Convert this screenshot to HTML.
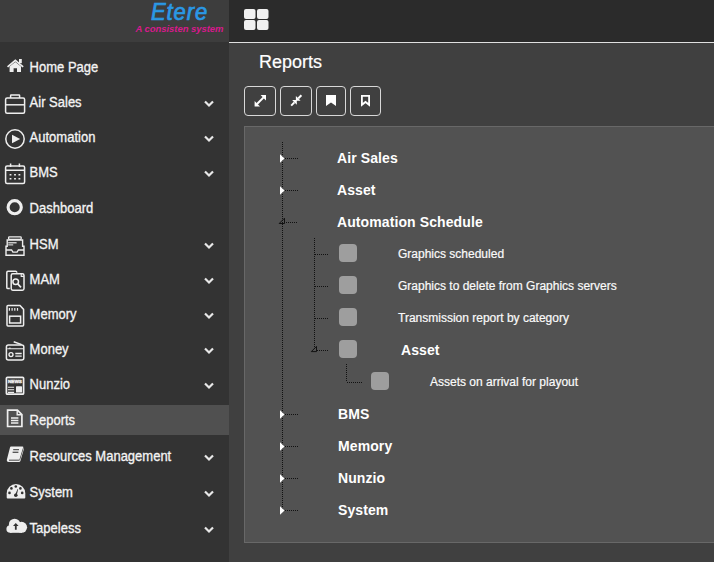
<!DOCTYPE html>
<html><head><meta charset="utf-8">
<style>
html,body{margin:0;padding:0;width:714px;height:562px;overflow:hidden;background:#404040;font-family:"Liberation Sans",sans-serif;position:relative}
.a{position:absolute}
#sb{left:0;top:0;width:229px;height:562px;background:#333}
#logo{left:0;top:0;width:229px;height:42px;background:#3d3d3d}
#act{left:0;top:405px;width:229px;height:30px;background:#505050}
.it{position:absolute;left:29.6px;font-size:13px;line-height:13px;color:#f4f4f4;white-space:nowrap;-webkit-text-stroke:0.3px #f4f4f4;transform:scaleY(1.08);transform-origin:0 11px}
#top{left:229px;top:0;width:485px;height:42px;background:#2b2b2b;border-bottom:1px solid #e0e0e0}
#title{left:259px;top:53px;font-size:18px;line-height:18px;color:#fff;-webkit-text-stroke:0.2px #fff}
.btn{position:absolute;top:86px;height:28px;border:1px solid #d8d8d8;border-radius:4px;box-sizing:border-box;height:30px}
#panel{left:244px;top:126px;width:480px;height:417px;background:#525252;border:1px solid #686868;box-sizing:border-box}
.tl{position:absolute;font-size:14px;line-height:14px;font-weight:bold;color:#fff;white-space:nowrap;letter-spacing:0.1px}
.lf{position:absolute;font-size:12px;line-height:12px;color:#fafafa;white-space:nowrap;-webkit-text-stroke:0.2px #fafafa}
.cb{position:absolute;width:18px;height:18px;border-radius:4px;background:#9e9e9e}
#etere{left:151px;top:1.5px;font-size:22px;line-height:22px;font-style:italic;font-weight:normal;color:#2a98e6;letter-spacing:0.9px;transform:scaleY(1.05);transform-origin:0 19px;-webkit-text-stroke:0.7px #2a98e6}
#tag{left:135.5px;top:23.5px;font-size:9.5px;line-height:9.5px;font-style:italic;font-weight:bold;color:#d8198c;letter-spacing:-0.05px}
</style></head><body>
<div id="sb" class="a"></div>
<div id="logo" class="a"></div>
<div id="etere" class="a">Etere</div>
<div id="tag" class="a">A consisten system</div>
<div id="act" class="a"></div>
<div class="it" style="top:61px">Home Page</div>
<div class="it" style="top:96px">Air Sales</div>
<div class="it" style="top:131px">Automation</div>
<div class="it" style="top:166px">BMS</div>
<div class="it" style="top:202px">Dashboard</div>
<div class="it" style="top:238px">HSM</div>
<div class="it" style="top:273px">MAM</div>
<div class="it" style="top:308px">Memory</div>
<div class="it" style="top:343px">Money</div>
<div class="it" style="top:378px">Nunzio</div>
<div class="it" style="top:414px">Reports</div>
<div class="it" style="top:450px">Resources Management</div>
<div class="it" style="top:486px">System</div>
<div class="it" style="top:522px">Tapeless</div>

<svg class="a" style="left:0;top:0" width="229" height="562" viewBox="0 0 229 562">
<g fill="none" stroke="#e8e8e8" stroke-width="2.2" stroke-linecap="butt" stroke-linejoin="miter">
<path d="M205,101.5 L209,105.5 L213,101.5"/>
<path d="M205,136.5 L209,140.5 L213,136.5"/>
<path d="M205,171.5 L209,175.5 L213,171.5"/>
<path d="M205,243.5 L209,247.5 L213,243.5"/>
<path d="M205,278.5 L209,282.5 L213,278.5"/>
<path d="M205,313.5 L209,317.5 L213,313.5"/>
<path d="M205,348.5 L209,352.5 L213,348.5"/>
<path d="M205,383.5 L209,387.5 L213,383.5"/>
<path d="M205,455.5 L209,459.5 L213,455.5"/>
<path d="M205,491.5 L209,495.5 L213,491.5"/>
<path d="M205,527.5 L209,531.5 L213,527.5"/>
</g>
<!-- home -->
<g fill="#eee">
<path d="M7,66.3 L15.3,59.3 L23.7,66.3 L22.6,67.5 L15.3,61.4 L8.1,67.5 Z"/>
<rect x="19" y="59" width="2.8" height="4.2"/>
<path d="M9.6,66.6 L15.3,62 L21,66.6 V72 H17 V68.2 H13.6 V72 H9.6 Z"/>
</g>
<g fill="none" stroke="#eee" stroke-width="1.5">
<!-- briefcase -->
<rect x="5.6" y="98" width="19" height="15.2" rx="1.5"/>
<path d="M10.6,98 V95.6 Q10.6,95 11.2,95 H19 Q19.6,95 19.6,95.6 V98"/>
<path d="M5.6,104.8 H24.6"/>
<!-- play -->
<circle cx="15" cy="139" r="9.2"/>
<!-- calendar -->
<rect x="5.6" y="166" width="19" height="17.4" rx="1.5"/>
<path d="M5.6,170.3 H24.6 M10.6,163.5 V167 M19.4,163.5 V167"/>
<!-- dashboard ring -->
<circle cx="14.7" cy="207.2" r="6.6" stroke-width="3.1"/>
<!-- HSM tray -->
<rect x="8.6" y="236.8" width="12.6" height="2.6" rx="0.8" stroke-width="1.3"/>
<path d="M7.2,240 H22.6 V246.2 H24 V255.2 H6 V246.2 H7.2 Z" stroke-width="1.4"/>
<path d="M6,250 H11.6 L12.9,252.2 H17.1 L18.4,250 H24" stroke-width="1.3"/>
<!-- MAM -->
<path d="M9.8,288.6 H8 Q6.8,288.6 6.8,287.4 V272.4 Q6.8,271.2 8,271.2 H15.6 Q16.6,271.2 17,272.6"/>
<rect x="11.2" y="273.8" width="12.8" height="16.4" rx="1.6"/>
<path d="M21.2,274 V276.4 H23.8" stroke-width="1.1"/>
<circle cx="15.7" cy="281.8" r="2.8"/>
<path d="M17.7,283.9 L21,287.3" stroke-width="1.7"/>
<!-- memory -->
<path d="M8,305.6 H20 L23.6,309.4 V325 Q23.6,326 22.6,326 H8 Q7,326 7,325 V306.6 Q7,305.6 8,305.6 Z"/>
<rect x="9.6" y="316.2" width="11" height="6.8"/>
<!-- radio -->
<rect x="6.4" y="345" width="17.4" height="15" rx="2"/>
<path d="M13.7,341.7 L21.7,344.6"/>
<path d="M7.3,348.8 H23.3 M9.9,348.8 V347.4" stroke-width="1.1"/>
<circle cx="11" cy="354.6" r="2" stroke-width="1.4"/>
<path d="M15.3,353.5 H21.7 M15.3,356.2 H21.7" stroke-width="1.3"/>
<!-- newspaper -->
<rect x="6.4" y="377.3" width="17.2" height="16.9" rx="1" stroke-width="1.7"/>
<path d="M7.9,387.3 H14.1 M7.9,389.8 H14.1 M7.9,392.4 H14.1" stroke-width="1.1"/>
<!-- reports file -->
<path d="M7.6,410.1 H17.4 L21.9,414.6 V426.5 H7.6 Z" stroke-width="1.7"/>
<path d="M17.2,410.3 V414.8 H21.7" stroke-width="1.4"/>
<path d="M11,418 H18.4 M11,420.5 H18.4 M11,423 H18.4" stroke-width="1.3"/>
</g>
<g fill="#eee">
<path d="M12,134.8 L20.2,139 L12,143.2 Z"/>
<rect x="9.5" y="174.1" width="2" height="1.3" rx="0.5"/><rect x="14" y="174.1" width="2" height="1.3" rx="0.5"/><rect x="18.4" y="174.1" width="2" height="1.3" rx="0.5"/>
<rect x="9.5" y="178.1" width="2" height="1.3" rx="0.5"/><rect x="14" y="178.1" width="2" height="1.3" rx="0.5"/><rect x="18.4" y="178.1" width="2" height="1.3" rx="0.5"/>
<rect x="8.2" y="242.2" width="8.4" height="1.2"/><rect x="8.2" y="244.4" width="5" height="1"/>
<rect x="8.8" y="308" width="1.2" height="2.7"/><rect x="11.5" y="308" width="1.2" height="2.7"/><rect x="14.2" y="308" width="1.2" height="2.7"/><rect x="16.9" y="308" width="1.2" height="2.7"/>
<text x="7.9" y="383.2" font-family="Liberation Sans" font-weight="bold" font-size="4.4" textLength="14.1" lengthAdjust="spacingAndGlyphs" stroke="#eee" stroke-width="0.35">NEWS</text>
<rect x="16" y="386.3" width="6" height="6.3" rx="0.6"/>
<!-- book -->
<path d="M11,446.6 H22.4 Q23.6,446.6 23.3,447.9 L23.9,449 L20.4,461 Q20.1,462 19,462 H8.6 Q6.4,462 6.9,459.6 L10,447.6 Q10.2,446.6 11,446.6 Z"/>
<!-- tacho -->
<path d="M6.7,493.3 A9.3,9.3 0 0 1 25.3,493.3 V497.4 Q25.3,498.4 24.3,498.4 H7.7 Q6.7,498.4 6.7,497.4 Z"/>
<!-- cloud -->
<circle cx="14.6" cy="524.4" r="5.7"/><circle cx="21.6" cy="527.3" r="5.5"/><circle cx="10.2" cy="529" r="3.8"/><rect x="10" y="527" width="12" height="5.8"/>
</g>
<g fill="#333">

<rect x="13.2" y="449.2" width="5.8" height="1"/><rect x="12.6" y="451.7" width="5.8" height="1.1"/><rect x="9" y="459.7" width="10.5" height="0.9"/><path d="M22.9,448.2 L23.5,448.4 L20,460 L19.4,459.8 Z"/>
<circle cx="15.8" cy="495.3" r="1.8"/>
<path d="M15,495 L17.6,489 L18.1,489.2 L16.7,495.5 Z"/>
<circle cx="9.5" cy="492.9" r="1.3"/><circle cx="11.4" cy="488.4" r="1.3"/><circle cx="15.8" cy="486.5" r="1.3"/><circle cx="20.4" cy="488.4" r="1.3"/><circle cx="22.2" cy="492.9" r="1.3"/>
<path d="M15.8,523 L18.6,525.9 H16.7 V529.8 H14.9 V525.9 H13 Z"/>
</g>
</svg>

<div id="top" class="a"></div>
<svg class="a" style="left:244px;top:9px" width="25" height="21" viewBox="0 0 25 21">
<g fill="#f0f0f0"><rect x="0" y="0" width="11.5" height="10" rx="2"/><rect x="13" y="0" width="11.5" height="10" rx="2"/><rect x="0" y="11" width="11.5" height="10" rx="2"/><rect x="13" y="11" width="11.5" height="10" rx="2"/></g>
</svg>

<div id="title" class="a">Reports</div>
<div class="btn" style="left:244px;width:32px"></div>
<div class="btn" style="left:280px;width:32px"></div>
<div class="btn" style="left:316px;width:30px"></div>
<div class="btn" style="left:350px;width:31px"></div>
<svg class="a" style="left:244px;top:86px" width="140" height="30" viewBox="0 0 140 30">
<g fill="#fff">
<path d="M22,9 L16.6,9 L22,14.4 Z"/>
<path d="M10.6,20.4 L10.6,15 L16,20.4 Z"/>
<path d="M51.9,14.8 L51.9,10.1 L56.6,14.8 Z"/>
<path d="M52.8,14 L48.1,14 L52.8,18.7 Z"/>
<path d="M82,9 H92 V20 L87,16.6 L82,20 Z"/>
</g>
<g stroke="#fff" stroke-width="2" fill="none">
<path d="M13,18 L19.6,11.4"/>
<path d="M54.2,12.5 L57.4,9.3"/>
<path d="M50.4,16.4 L47.2,19.6"/>
</g>
<path d="M117.9,9.9 H125.1 V18.8 L121.5,16 L117.9,18.8 Z" fill="none" stroke="#fff" stroke-width="1.8" stroke-linejoin="miter"/>
</svg>

<div id="panel" class="a"></div>
<svg class="a" style="left:244px;top:126px" width="470" height="417" viewBox="244 126 470 417">
<g stroke="#111" stroke-width="1" stroke-dasharray="1 1" fill="none">
<path d="M282.5,142 V510"/>
<path d="M285,158.5 H298 M285,190.5 H298 M286,222.5 H298 M285,414.5 H298 M285,446.5 H298 M285,478.5 H298 M285,510.5 H298"/>
<path d="M314.5,238 V350"/>
<path d="M315,254.5 H329 M315,286.5 H329 M315,318.5 H329 M317,350.5 H329"/>
<path d="M346.5,364 V382"/>
<path d="M347,382.5 H362"/>
</g>
<g fill="#fff">
<path d="M280,154.2 L284.5,158.5 L280,162.8 Z"/>
<path d="M280,186.2 L284.5,190.5 L280,194.8 Z"/>
<path d="M280,410.2 L284.5,414.5 L280,418.8 Z"/>
<path d="M280,442.2 L284.5,446.5 L280,450.8 Z"/>
<path d="M280,474.2 L284.5,478.5 L280,482.8 Z"/>
<path d="M280,506.2 L284.5,510.5 L280,514.8 Z"/>
</g>
<g fill="none" stroke="#111" stroke-width="1">
<path d="M284.5,218.2 V223.5 H279.2 Z"/>
<path d="M316.5,346.4 V351.6 H311.3 Z"/>
</g>
</svg>
<div class="tl" style="left:337px;top:151px">Air Sales</div>
<div class="tl" style="left:337px;top:183px">Asset</div>
<div class="tl" style="left:337px;top:215px">Automation Schedule</div>
<div class="cb" style="left:339px;top:244px"></div>
<div class="lf" style="left:398px;top:248px">Graphics scheduled</div>
<div class="cb" style="left:339px;top:276px"></div>
<div class="lf" style="left:398px;top:280px">Graphics to delete from Graphics servers</div>
<div class="cb" style="left:339px;top:308px"></div>
<div class="lf" style="left:398px;top:312px">Transmission report by category</div>
<div class="cb" style="left:339px;top:340px"></div>
<div class="tl" style="left:401px;top:343px">Asset</div>
<div class="cb" style="left:371px;top:372px"></div>
<div class="lf" style="left:430px;top:376px">Assets on arrival for playout</div>
<div class="tl" style="left:338px;top:407px">BMS</div>
<div class="tl" style="left:338px;top:439px">Memory</div>
<div class="tl" style="left:338px;top:471px">Nunzio</div>
<div class="tl" style="left:338px;top:503px">System</div>
</body></html>
